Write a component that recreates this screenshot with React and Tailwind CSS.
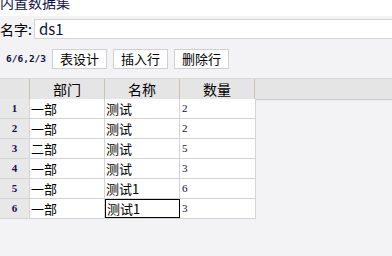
const rows = [
  { n: 1, dept: "一部", name: "测试", qty: "2" },
  { n: 2, dept: "一部", name: "测试", qty: "2" },
  { n: 3, dept: "二部", name: "测试", qty: "5" },
  { n: 4, dept: "一部", name: "测试", qty: "3" },
  { n: 5, dept: "一部", name: "测试1", qty: "6" },
  { n: 6, dept: "一部", name: "测试1", qty: "3" },
];

const cjk = "font-['Noto_Sans_CJK_SC','Noto_Sans',sans-serif]";

export default function App() {
  return (
    <div className={`w-[392px] h-[256px] overflow-hidden bg-[#f3f3f5] ${cjk} text-black`}>
      {/* title (clipped at top) */}
      <div className="h-[16px] bg-white overflow-hidden">
        <div className="-mt-[8px] text-[14px] leading-[20px] text-[#10104a]">内置数据集</div>
      </div>

      {/* name row */}
      <div className="flex items-center h-[22px] mt-[2px]">
        <span className="w-[34px] text-[14px] leading-[18px]">名字:</span>
        <div className="flex-1 h-[20px] bg-white border-y border-l border-[#d4d4d4] flex items-center pl-[4px] text-[15px] text-[#101040]">
          ds1
        </div>
      </div>

      {/* toolbar */}
      <div className="flex items-center h-[38px] gap-[6px] pl-[6px]">
        <span className="font-['DejaVu_Sans_Mono',monospace] text-[9.5px] font-bold text-[#10104a] w-[40px]">6/6,2/3</span>
        {["表设计", "插入行", "删除行"].map((t) => (
          <button
            key={t}
            className="w-[55px] h-[20px] bg-white border border-[#d0d0d0] text-[13px] leading-[18px] text-black"
          >
            {t}
          </button>
        ))}
      </div>

      {/* table */}
      <div className="border-t border-[#d8d8d8]">
        <div className="flex h-[20px] bg-[#e5e5e5] shadow-[0_1px_1px_rgba(0,0,0,0.15)] text-[14px] leading-[20px] text-black">
          <div className="w-[30px] border-r border-[#c9c2b4]" />
          <div className="w-[75px] text-center border-r border-[#c9c2b4]">部门</div>
          <div className="w-[75px] text-center border-r border-[#c9c2b4]">名称</div>
          <div className="w-[75px] text-center border-r border-[#c9c2b4]">数量</div>
        </div>
        <div className="w-[256px] border-r border-[#d4d4d4]">
          {rows.map((r) => (
            <div key={r.n} className="flex h-[20px] border-b border-[#d4d4d4] bg-white text-[13px] leading-[19px] text-black">
              <div className="w-[30px] bg-[#e8e8e8] border-r border-[#d4d4d4] text-center font-['Liberation_Serif',serif] font-bold text-[11px] text-[#10104a]">
                {r.n}
              </div>
              <div className="w-[75px] border-r border-[#d4d4d4] pl-[1px] text-black">{r.dept}</div>
              <div
                className={
                  r.n === 6
                    ? "w-[75px] border border-black pl-[1px] leading-[17px] text-black"
                    : "w-[75px] border-r border-[#d4d4d4] pl-[1px] text-black"
                }
              >
                {r.name}
              </div>
              <div className="w-[75px] pl-[2px] font-['Liberation_Serif',serif] text-[11px] text-[#101050]">{r.qty}</div>
            </div>
          ))}
        </div>
      </div>
    </div>
  );
}
